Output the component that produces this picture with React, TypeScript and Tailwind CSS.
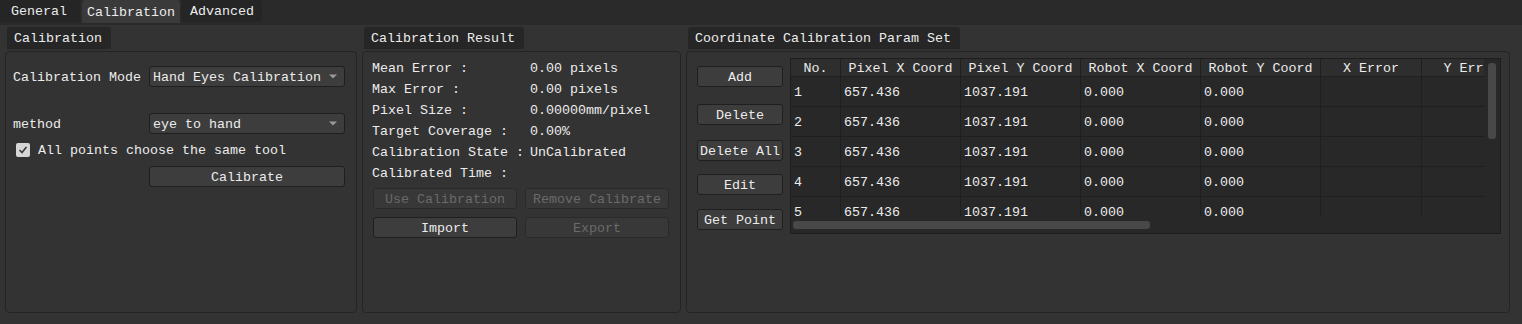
import React from 'react';

const font = { fontFamily: '"Liberation Mono", "DejaVu Sans Mono", monospace' };

const Btn = ({ label, disabled, className }: { label: string; disabled?: boolean; className?: string }) => (
  <div
    className={
      'h-[21px] flex items-center justify-center pt-[2px] rounded-[3px] border whitespace-nowrap ' +
      (disabled ? 'bg-[#383838] border-[#2a2a2a] text-[#6a6a6a] ' : 'bg-[#3d3d3d] border-[#1f1f1f] text-[#ececec] ') +
      (className || '')
    }
  >
    {label}
  </div>
);

const Combo = ({ value }: { value: string }) => (
  <div className="w-[196px] h-[21px] flex items-center justify-between rounded-[3px] border border-[#1f1f1f] bg-[#3d3d3d] pl-[3px] pr-[7px]">
    <span className="whitespace-nowrap pt-[2px]">{value}</span>
    <svg width="8" height="5" viewBox="0 0 8 5">
      <path d="M0 0.5 L8 0.5 L4 4.5 Z" fill="#9a9a9a" />
    </svg>
  </div>
);

const Group = ({ title, className, children }: { title: string; className: string; children: React.ReactNode }) => (
  <div className={'flex flex-col ' + className}>
    <div className="flex">
      <div className="ml-[2px] h-[22px] flex items-center pt-[2px] pl-[7px] pr-[9px] bg-[#262626] rounded-t-[3px] whitespace-nowrap">
        {title}
      </div>
    </div>
    <div className="mt-[2px] h-[262px] border border-[#242424] rounded-[4px] bg-[#333333]">{children}</div>
  </div>
);

const cols = [
  { name: 'No.', w: 'w-[50px]' },
  { name: 'Pixel X Coord', w: 'w-[120px]' },
  { name: 'Pixel Y Coord', w: 'w-[120px]' },
  { name: 'Robot X Coord', w: 'w-[120px]' },
  { name: 'Robot Y Coord', w: 'w-[120px]' },
  { name: 'X Error', w: 'w-[101px]' },
  { name: 'Y Error', w: 'w-[100px]' },
];

const rows = [1, 2, 3, 4, 5].map((n) => [String(n), '657.436', '1037.191', '0.000', '0.000', '', '']);

const resultRows = [
  ['Mean Error :', '0.00 pixels'],
  ['Max Error :', '0.00 pixels'],
  ['Pixel Size :', '0.00000mm/pixel'],
  ['Target Coverage :', '0.00%'],
  ['Calibration State :', 'UnCalibrated'],
  ['Calibrated Time :', ''],
];

export default function App() {
  return (
    <div className="w-[1522px] h-[324px] bg-[#333333] text-[#ececec] text-[13.33px] leading-none overflow-hidden" style={font}>
      {/* tab bar */}
      <div className="h-[25px] bg-[#2a2a2a] flex items-start">
        <div className="w-[80px] h-[22px] flex items-center pt-[2px] pl-[11px] bg-[#252525] rounded-t-[3px]">General</div>
        <div className="ml-[2px] w-[98px] h-[23px] flex items-center pt-[2px] justify-center bg-[#3a3a3a] rounded-t-[3px]">Calibration</div>
        <div className="ml-[1px] w-[81px] h-[22px] flex items-center pt-[2px] pl-[9px] bg-[#252525] rounded-t-[3px]">Advanced</div>
      </div>

      <div className="flex gap-[5px] pl-[5px] pt-[2px]">
        {/* left */}
        <Group title="Calibration" className="w-[352px]">
          <div className="pt-[14px] pl-[7px]">
            <div className="flex items-center h-[21px]">
              <span className="w-[136px] whitespace-nowrap pt-[2px]">Calibration Mode</span>
              <Combo value="Hand Eyes Calibration" />
            </div>
            <div className="flex items-center h-[21px] mt-[26px]">
              <span className="w-[136px] pt-[2px]">method</span>
              <Combo value="eye to hand" />
            </div>
            <div className="flex items-center h-[14px] mt-[9px] pl-[3px]">
              <div className="w-[14px] h-[14px] bg-[#d6d6d6] rounded-[2px] flex items-center justify-center">
                <svg width="10" height="10" viewBox="0 0 10 10">
                  <path d="M1.5 5 L4 7.5 L8.5 2" stroke="#3a3a3a" strokeWidth="1.6" fill="none" />
                </svg>
              </div>
              <span className="ml-[8px] whitespace-nowrap pt-[2px]">All points choose the same tool</span>
            </div>
            <Btn label="Calibrate" className="w-[196px] ml-[136px] mt-[9px]" />
          </div>
        </Group>

        {/* middle */}
        <Group title="Calibration Result" className="w-[319px]">
          <div className="pt-[5px] pl-[9px]">
            {resultRows.map(([k, v]) => (
              <div key={k} className="flex items-center h-[21px] pt-[2px] whitespace-nowrap">
                <span className="w-[158px]">{k}</span>
                <span>{v}</span>
              </div>
            ))}
            <div className="flex gap-[8px] mt-[5px] ml-[1px]">
              <Btn label="Use Calibration" disabled className="w-[144px]" />
              <Btn label="Remove Calibrate" disabled className="w-[144px]" />
            </div>
            <div className="flex gap-[8px] mt-[8px] ml-[1px]">
              <Btn label="Import" className="w-[144px]" />
              <Btn label="Export" disabled className="w-[144px]" />
            </div>
          </div>
        </Group>

        {/* right */}
        <Group title="Coordinate Calibration Param Set" className="w-[824px]">
          <div className="flex pt-[6px] pl-[10px]">
            <div className="flex flex-col w-[86px]">
              <Btn label="Add" className="mt-[8px]" />
              <Btn label="Delete" className="mt-[17px]" />
              <Btn label="Delete All" className="mt-[15px]" />
              <Btn label="Edit" className="mt-[13px]" />
              <Btn label="Get Point" className="mt-[14px]" />
            </div>
            <div className="ml-[7px] w-[711px] h-[176px] border border-[#1e1e1e] bg-[#282828] flex">
              <div className="w-[693px] flex flex-col">
                <div className="h-[158px] overflow-hidden">
                  <div className="flex h-[18px] bg-[#2e2e2e] border-b border-[#1f1f1f] w-max">
                    {cols.map((c) => (
                      <div key={c.name} className={c.w + ' shrink-0 flex items-center justify-center pt-[2px] border-r border-[#1f1f1f] whitespace-nowrap'}>
                        {c.name}
                      </div>
                    ))}
                  </div>
                  {rows.map((r, i) => (
                    <div key={i} className="flex h-[30px] border-b border-[#1f1f1f] w-max">
                      {r.map((cell, j) => (
                        <div key={j} className={cols[j].w + ' shrink-0 flex items-center pt-[2px] pl-[3px] border-r border-[#1f1f1f] whitespace-nowrap'}>
                          {cell}
                        </div>
                      ))}
                    </div>
                  ))}
                </div>
                <div className="h-[16px] flex items-center pl-[2px]">
                  <div className="w-[357px] h-[8px] rounded-[3px] bg-[#484848]" />
                </div>
              </div>
              <div className="w-[16px] flex flex-col items-center pt-[4px]">
                <div className="w-[8px] h-[76px] rounded-[3px] bg-[#484848]" />
              </div>
            </div>
          </div>
        </Group>
      </div>
    </div>
  );
}
